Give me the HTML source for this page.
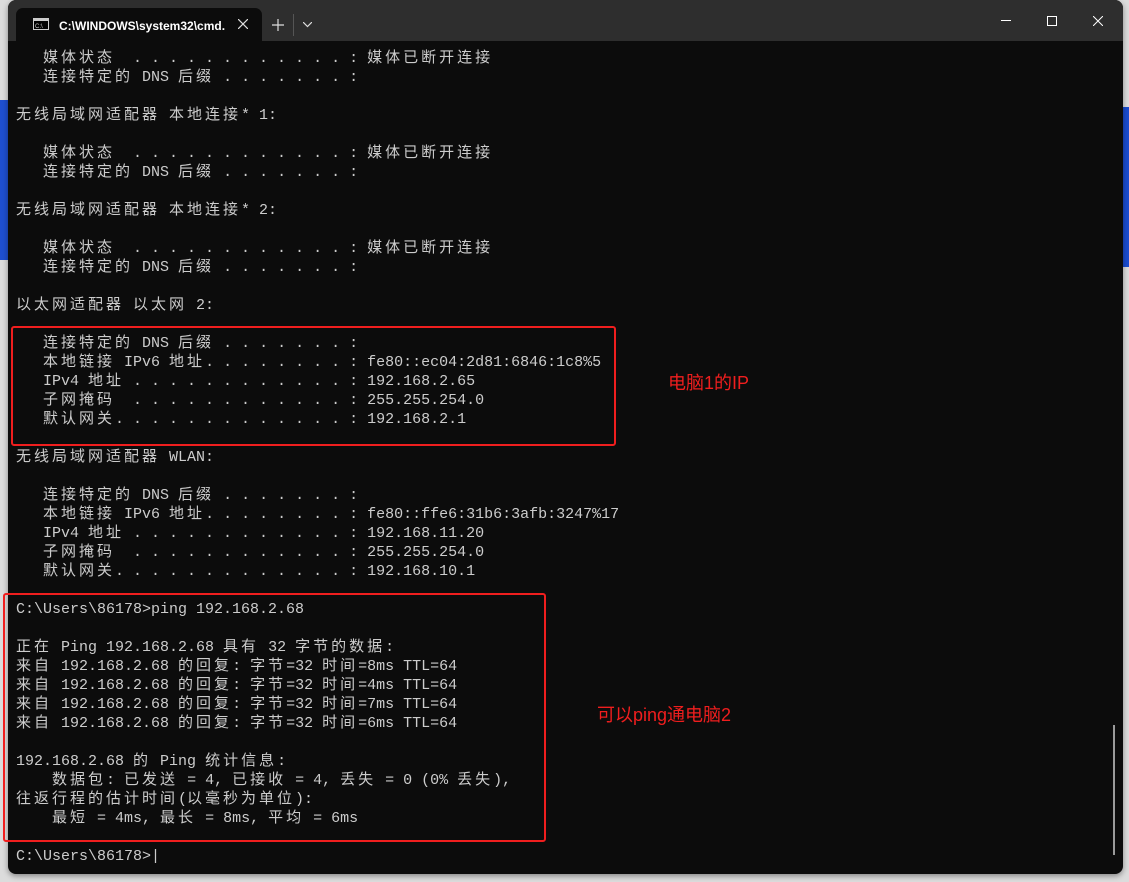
<!DOCTYPE html>
<html><head><meta charset="utf-8"><style>
html,body{margin:0;padding:0;width:1129px;height:882px;overflow:hidden;background:#dcdcdc;position:relative}
.win{position:absolute;left:8px;top:0;width:1115px;height:874px;background:#0c0c0c;border-radius:8px;overflow:hidden;box-shadow:0 2px 6px rgba(0,0,0,.4)}
.tb{position:absolute;left:0;top:0;width:100%;height:41px;background:#2e2e2e}
.tab{position:absolute;left:8px;top:8px;width:246px;height:33px;background:#0c0c0c;border-radius:7px 7px 0 0}
.tt{position:absolute;left:43px;top:11px;color:#fff;font:bold 12px "Liberation Sans",sans-serif}
pre{position:absolute;left:16px;top:49px;margin:0;color:#cccccc;font:15px/19px "Liberation Mono","Noto Sans CJK SC",monospace}
b{font-weight:normal;letter-spacing:3px;font-family:"Noto Sans CJK SC",sans-serif;display:inline-block;height:19px;line-height:19px;vertical-align:top;position:relative;top:-2px}
.box{position:absolute;border:2px solid #f01e1e;border-radius:3px}
.note{position:absolute;color:#f01e1e;font:18px "Liberation Sans","Noto Sans CJK SC",sans-serif}
</style></head><body>
<div style="position:absolute;left:0;top:100px;width:8px;height:160px;background:#1e4fd0"></div>
<div style="position:absolute;right:0;top:107px;width:8px;height:160px;background:#1a4cd0"></div>
<div class="win">
<div class="tb">
<div class="tab">
<svg style="position:absolute;left:17px;top:10px" width="16" height="12"><rect x=".5" y=".5" width="15" height="11" fill="#000" stroke="#ccc"/><rect x="1" y="1" width="14" height="2" fill="#ccc"/><text x="2" y="10" font-size="6" fill="#ccc" font-family="Liberation Sans">C:\_</text></svg>
<div class="tt">C:\WINDOWS\system32\cmd.</div>
<svg style="position:absolute;left:222px;top:11px" width="10" height="10"><path d="M0 0L10 10M10 0L0 10" stroke="#ddd" stroke-width="1.2"/></svg>
</div>
<svg style="position:absolute;left:264px;top:19px" width="12" height="12"><path d="M6 0V12M0 6H12" stroke="#ddd" stroke-width="1.2"/></svg>
<div style="position:absolute;left:285px;top:14px;width:1px;height:22px;background:#555"></div>
<svg style="position:absolute;left:295px;top:22px" width="9" height="6"><path d="M0 0L4.5 4.5L9 0" stroke="#ddd" fill="none" stroke-width="1.2"/></svg>
<div style="position:absolute;left:993px;top:20px;width:10px;height:1px;background:#fff"></div>
<div style="position:absolute;left:1039px;top:16px;width:8px;height:8px;border:1px solid #fff"></div>
<svg style="position:absolute;left:1085px;top:16px" width="10" height="10"><path d="M0 0L10 10M10 0L0 10" stroke="#fff" stroke-width="1"/></svg>
</div>
<div style="position:absolute;left:1105px;top:725px;width:2px;height:130px;background:#9a9a9a"></div>
</div>
<pre>   <b>媒体状态</b>  . . . . . . . . . . . . : <b>媒体已断开连接</b>
   <b>连接特定的</b> DNS <b>后缀</b> . . . . . . . :

<b>无线局域网适配器</b> <b>本地连接</b>* 1:

   <b>媒体状态</b>  . . . . . . . . . . . . : <b>媒体已断开连接</b>
   <b>连接特定的</b> DNS <b>后缀</b> . . . . . . . :

<b>无线局域网适配器</b> <b>本地连接</b>* 2:

   <b>媒体状态</b>  . . . . . . . . . . . . : <b>媒体已断开连接</b>
   <b>连接特定的</b> DNS <b>后缀</b> . . . . . . . :

<b>以太网适配器</b> <b>以太网</b> 2:

   <b>连接特定的</b> DNS <b>后缀</b> . . . . . . . :
   <b>本地链接</b> IPv6 <b>地址</b>. . . . . . . . : fe80::ec04:2d81:6846:1c8%5
   IPv4 <b>地址</b> . . . . . . . . . . . . : 192.168.2.65
   <b>子网掩码</b>  . . . . . . . . . . . . : 255.255.254.0
   <b>默认网关</b>. . . . . . . . . . . . . : 192.168.2.1

<b>无线局域网适配器</b> WLAN:

   <b>连接特定的</b> DNS <b>后缀</b> . . . . . . . :
   <b>本地链接</b> IPv6 <b>地址</b>. . . . . . . . : fe80::ffe6:31b6:3afb:3247%17
   IPv4 <b>地址</b> . . . . . . . . . . . . : 192.168.11.20
   <b>子网掩码</b>  . . . . . . . . . . . . : 255.255.254.0
   <b>默认网关</b>. . . . . . . . . . . . . : 192.168.10.1

C:\Users\86178>ping 192.168.2.68

<b>正在</b> Ping 192.168.2.68 <b>具有</b> 32 <b>字节的数据</b>:
<b>来自</b> 192.168.2.68 <b>的回复</b>: <b>字节</b>=32 <b>时间</b>=8ms TTL=64
<b>来自</b> 192.168.2.68 <b>的回复</b>: <b>字节</b>=32 <b>时间</b>=4ms TTL=64
<b>来自</b> 192.168.2.68 <b>的回复</b>: <b>字节</b>=32 <b>时间</b>=7ms TTL=64
<b>来自</b> 192.168.2.68 <b>的回复</b>: <b>字节</b>=32 <b>时间</b>=6ms TTL=64

192.168.2.68 <b>的</b> Ping <b>统计信息</b>:
    <b>数据包</b>: <b>已发送</b> = 4, <b>已接收</b> = 4, <b>丢失</b> = 0 (0% <b>丢失</b>),
<b>往返行程的估计时间</b>(<b>以毫秒为单位</b>):
    <b>最短</b> = 4ms, <b>最长</b> = 8ms, <b>平均</b> = 6ms

C:\Users\86178>|</pre>
<div class="box" style="left:11px;top:326px;width:601px;height:116px"></div>
<div class="box" style="left:3px;top:593px;width:539px;height:245px"></div>
<div class="note" style="left:668px;top:369px">电脑1的IP</div>
<div class="note" style="left:597px;top:701px">可以ping通电脑2</div>
</body></html>
